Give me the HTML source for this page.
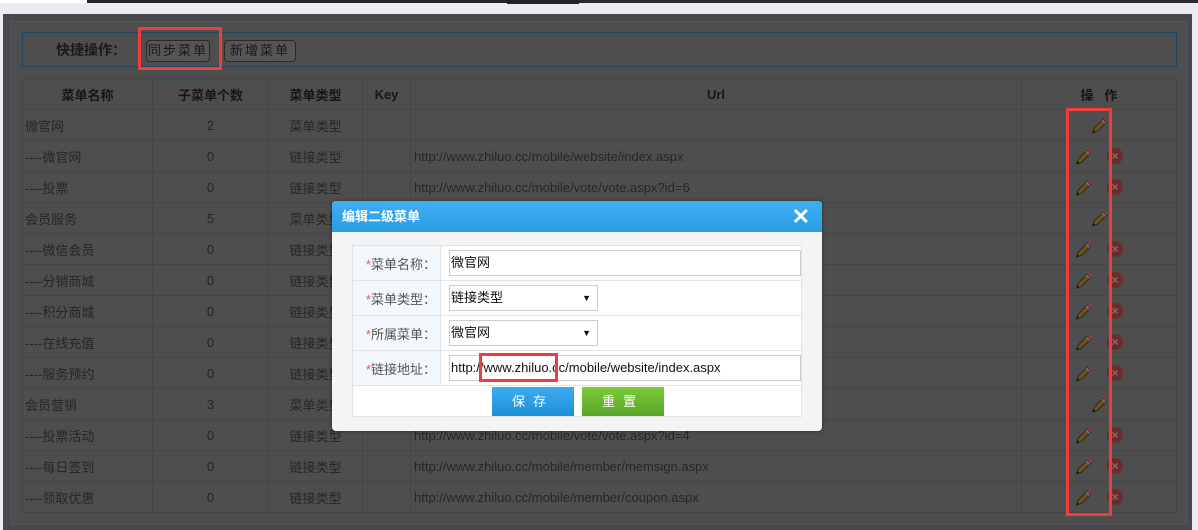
<!DOCTYPE html>
<html><head><meta charset="utf-8"><style>
*{margin:0;padding:0;box-sizing:border-box}
body{width:1198px;height:530px;overflow:hidden;background:#eaecef;font-family:"Liberation Sans","Noto Sans CJK SC",sans-serif;position:relative;font-size:12px}
.abs{position:absolute}
.outer{left:3px;top:14px;width:1189px;height:516px;background:#47494c}
.panel{left:10px;top:21px;width:1177px;height:504px;background:#4e4e4e;border:1px solid #555}
.quick{left:22px;top:32px;width:1155px;height:35px;border:1px solid #1d4763}
.btn{top:40px;height:22px;border:1px solid #2a2a2a;border-radius:4px;background:#555;color:#1a1a1a;font-size:13px;letter-spacing:2px;text-align:center;line-height:20px}
table.g{position:absolute;left:22px;top:78px;width:1155px;border-collapse:collapse;border-top:1px solid #1d4763;color:#262626;font-size:13px}
table.g td,table.g th{border:1px solid #464646;height:31px;padding:0}
table.g th{font-weight:bold;color:#161616;font-size:13px}
table.g td.c{text-align:center}
.pen{display:inline-block;width:17px;height:17px;vertical-align:middle}
.x{display:inline-block;width:16px;height:16px;border-radius:50%;background:#6a2c2c;color:#8a6a6a;font-size:12px;line-height:16px;text-align:center;vertical-align:middle;font-weight:bold}
.dlg{left:332px;top:201px;width:490px;height:230px;background:#f4f4f4;border-radius:4px;box-shadow:0 0 4px rgba(0,0,0,.4)}
.dh{left:0;top:0;width:490px;height:31px;background:linear-gradient(#3db0f5,#2b9ce3);border-radius:4px 4px 0 0;color:#fff;font-weight:bold;font-size:13px;line-height:31px;padding-left:10px}
table.f{position:absolute;left:20px;top:44px;width:450px;border-collapse:collapse;background:#fff}
table.f td{border:1px solid #e3e3e3;height:35px}
table.f td.l{width:89px;background:#f3f8fd;text-align:right;color:#555;font-size:13px;padding-right:4px}
.l b{color:#e55;font-weight:normal}
.inp{height:26px;border:1px solid #ccc;background:#fff;margin-left:8px;font-size:13px;color:#111;line-height:24px;padding-left:1px;position:relative}
.red{border:3px solid #f03c3c;position:absolute}
</style></head><body>
<div class="abs" style="left:0;top:0;width:87px;height:3px;background:#fff"></div>
<div class="abs" style="left:87px;top:0;width:420px;height:3px;background:#222"></div>
<div class="abs" style="left:507px;top:0;width:72px;height:4px;background:#222"></div>
<div class="abs" style="left:579px;top:0;width:619px;height:3px;background:#2a2a2a"></div>
<div class="abs outer"></div>
<div class="abs panel"></div>
<div class="abs quick"></div>
<div class="abs" style="left:56px;top:40px;font-weight:bold;font-size:14px;color:#1a1a1a">快捷操作：</div>
<div class="abs btn" style="left:146px;width:64px">同步菜单</div>
<div class="abs btn" style="left:224px;width:72px">新增菜单</div>
<table class="g">
<tr><th style="width:130px">菜单名称</th><th style="width:116px">子菜单个数</th><th style="width:94px">菜单类型</th><th style="width:48px">Key</th><th style="width:611px">Url</th><th>操&nbsp;&nbsp;&nbsp;作</th></tr>
</table>
<script>
var pen='<svg class="pen" viewBox="0 0 16 16"><path d="M1.5 15 L3 10.5 L11.5 2 L14.5 5 L6 13.5 Z" fill="#6b5320" stroke="#2a2210" stroke-width="0.8"/><path d="M11.5 2 L13 0.5 L16 3.5 L14.5 5 Z" fill="#8a3e3e"/><path d="M10.5 3 L13.5 6" stroke="#777" stroke-width="1.2"/><path d="M1.5 15 L2.3 12.5 L4 14.2 Z" fill="#111"/></svg>';
var rows=[["微官网","2","",0],["----微官网","0","http://www.zhiluo.cc/mobile/website/index.aspx",1],["----投票","0","http://www.zhiluo.cc/mobile/vote/vote.aspx?id=6",1],["会员服务","5","",0],["----微信会员","0","",1],["----分销商城","0","",1],["----积分商城","0","",1],["----在线充值","0","",1],["----服务预约","0","",1],["会员营销","3","",0],["----投票活动","0","http://www.zhiluo.cc/mobile/vote/vote.aspx?id=4",1],["----每日签到","0","http://www.zhiluo.cc/mobile/member/memsign.aspx",1],["----领取优惠","0","http://www.zhiluo.cc/mobile/member/coupon.aspx",1]];
var t=document.querySelector('table.g');
rows.forEach(function(r){var tr=t.insertRow();tr.innerHTML='<td style="padding-left:2px">'+r[0]+'</td><td class="c">'+r[1]+'</td><td class="c">'+(r[3]?'链接类型':'菜单类型')+'</td><td></td><td style="padding-left:3px">'+r[2]+'</td><td style="padding-left:'+(r[3]?53:69)+'px">'+pen+(r[3]?'<span class="x" style="margin-left:15px">×</span>':'')+'</td>';});
</script>
<div class="red" style="left:138px;top:27px;width:84px;height:43px"></div>
<div class="red" style="left:1066px;top:108px;width:46px;height:408px"></div>
<div class="abs dlg">
<div class="abs dh">编辑二级菜单<span style="position:absolute;right:12px;top:0;font-size:22px;font-weight:bold">✕</span></div>
<table class="f">
<tr><td class="l"><b>*</b>菜单名称：</td><td><div class="inp" style="width:352px">微官网</div></td></tr>
<tr><td class="l"><b>*</b>菜单类型：</td><td><div class="inp" style="width:149px">链接类型<span style="position:absolute;right:6px;font-size:9px">▼</span></div></td></tr>
<tr><td class="l"><b>*</b>所属菜单：</td><td><div class="inp" style="width:149px">微官网<span style="position:absolute;right:6px;font-size:9px">▼</span></div></td></tr>
<tr><td class="l"><b>*</b>链接地址：</td><td><div class="inp" style="width:352px">http://www.zhiluo.cc/mobile/website/index.aspx</div></td></tr>
<tr><td colspan="2" style="height:31px;position:relative">
<div class="abs" style="left:139px;top:1px;width:82px;height:29px;background:linear-gradient(#3cadf0,#1d8fd6);color:#fff;text-align:center;line-height:29px;font-size:13px;letter-spacing:8px">保存</div>
<div class="abs" style="left:229px;top:1px;width:82px;height:29px;background:linear-gradient(#7ccb3a,#5aa52a);color:#fff;text-align:center;line-height:29px;font-size:13px;letter-spacing:8px">重置</div>
</td></tr>
</table>
</div>
<div class="red" style="left:479px;top:353px;width:79px;height:29px"></div>
</body></html>
